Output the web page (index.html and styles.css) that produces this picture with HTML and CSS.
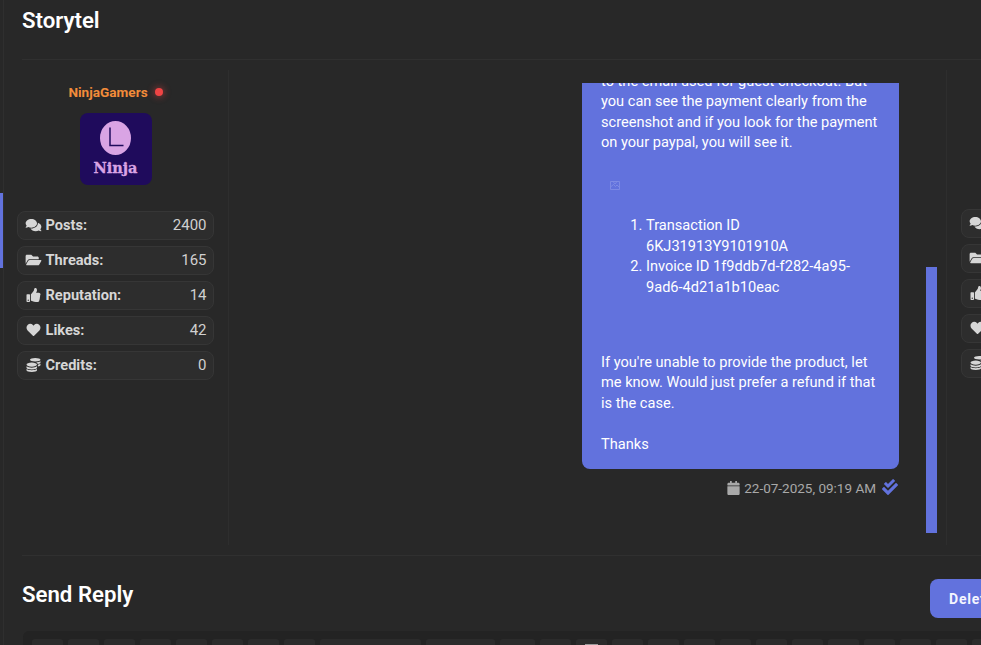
FILE: index.html
```html
<!DOCTYPE html>
<html lang="en">
<head>
<meta charset="utf-8">
<title>Storytel</title>
<link rel="stylesheet" href="styles.css">
</head>
<body>
<svg class="defs" width="0" height="0" aria-hidden="true">
  <symbol id="i-comments" viewBox="0 0 576 512"><path d="M416 192c0-88.4-93.1-160-208-160S0 103.6 0 192c0 34.3 14.1 65.9 38 92-13.4 30.2-35.5 54.2-35.8 54.5-2.2 2.3-2.8 5.7-1.5 8.7S4.8 352 8 352c36.6 0 66.9-12.3 88.7-25 32.2 15.7 70.3 25 111.3 25 114.9 0 208-71.6 208-160zm122 220c23.9-26 38-57.7 38-92 0-66.9-53.5-124.2-129.3-148.1.9 6.6 1.3 13.3 1.3 20.1 0 105.9-107.7 192-240 192-10.8 0-21.3-.8-31.7-1.9C207.8 439.6 281.8 480 368 480c41 0 79.1-9.2 111.3-25 21.8 12.7 52.1 25 88.7 25 3.2 0 6.1-1.9 7.3-4.8 1.3-2.9.7-6.3-1.5-8.7-.3-.3-22.4-24.2-35.8-54.5z"/></symbol>
  <symbol id="i-folder" viewBox="0 0 576 512"><path d="M572.694 292.093L500.27 416.248A63.997 63.997 0 0 1 444.989 448H45.025c-18.523 0-30.064-20.093-20.731-36.093l72.424-124.155A64 64 0 0 1 152 256h399.964c18.523 0 30.064 20.093 20.73 36.093zM152 224h328v-48c0-26.51-21.49-48-48-48H272l-64-64H48C21.49 64 0 85.49 0 112v278.046l69.077-118.418C86.214 242.25 117.989 224 152 224z"/></symbol>
  <symbol id="i-thumb" viewBox="0 0 512 512"><path d="M104 224H24c-13.255 0-24 10.745-24 24v240c0 13.255 10.745 24 24 24h80c13.255 0 24-10.745 24-24V248c0-13.255-10.745-24-24-24zM64 472c-13.255 0-24-10.745-24-24s10.745-24 24-24 24 10.745 24 24-10.745 24-24 24zM384 81.452c0 42.416-25.97 66.208-33.277 94.548h101.723c33.397 0 59.397 27.746 59.553 58.098.084 17.938-7.546 37.249-19.439 49.197l-.11.11c9.836 23.337 8.237 56.037-9.308 79.469 8.681 25.895-.069 57.704-16.382 74.757 4.298 17.598 2.244 32.575-6.148 44.632C440.202 511.587 389.616 512 346.839 512l-2.845-.001c-48.287-.017-87.806-17.598-119.56-31.725-15.957-7.099-36.821-15.887-52.651-16.178-6.54-.12-11.783-5.457-11.783-11.998v-213.77c0-3.2 1.282-6.271 3.558-8.521 39.614-39.144 56.648-80.587 89.117-113.111 14.804-14.832 20.188-37.236 25.393-58.902C282.515 39.293 291.817 0 312 0c24 0 72 8 72 81.452z"/></symbol>
  <symbol id="i-heart" viewBox="0 0 512 512"><path d="M462.3 62.6C407.5 15.9 326 24.3 275.7 76.2L256 96.5l-19.7-20.3C186.1 24.3 104.5 15.9 49.7 62.6c-62.8 53.6-66.1 149.8-9.9 207.9l193.5 199.8c12.5 12.9 32.8 12.9 45.3 0l193.5-199.8c56.3-58.1 53-154.3-9.8-207.9z"/></symbol>
  <symbol id="i-coins" viewBox="0 0 512 512"><path d="M0 405.3V448c0 35.3 86 64 192 64s192-28.7 192-64v-42.7C342.7 434.4 267.2 448 192 448S41.3 434.4 0 405.3zM320 128c106 0 192-28.7 192-64S426 0 320 0 128 28.7 128 64s86 64 192 64zM0 300.4V352c0 35.3 86 64 192 64s192-28.7 192-64v-51.6c-41.3 34-116.9 51.6-192 51.6S41.3 334.4 0 300.4zm416 11c57.3-11.1 96-31.7 96-55.4v-42.7c-23.2 16.4-57.3 27.6-96 34.5v63.6zM192 160C86 160 0 195.8 0 240s86 80 192 80 192-35.8 192-80-86-80-192-80zm219.3 56.3c60-10.8 100.7-32 100.7-56.3v-42.7c-35.5 25.1-96.5 38.6-160.7 41.8 29.5 14.3 51.2 33.5 60 57.2z"/></symbol>
  <symbol id="i-cal" viewBox="0 0 448 512"><path d="M12 192h424c6.6 0 12 5.4 12 12v260c0 26.5-21.5 48-48 48H48c-26.5 0-48-21.5-48-48V204c0-6.6 5.4-12 12-12zm436-44v-36c0-26.5-21.5-48-48-48h-48V12c0-6.6-5.4-12-12-12h-40c-6.6 0-12 5.4-12 12v52H160V12c0-6.6-5.4-12-12-12h-40c-6.6 0-12 5.4-12 12v52H48C21.5 64 0 85.5 0 112v36c0 6.6 5.4 12 12 12h424c6.6 0 12-5.4 12-12z"/></symbol>
  <symbol id="i-check" viewBox="0 0 512 512"><path d="M505 174.8l-39.6-39.6c-9.4-9.4-24.6-9.4-33.9 0L192 374.7 80.6 263.2c-9.4-9.4-24.6-9.4-33.9 0L7 302.9c-9.4 9.4-9.4 24.6 0 34L175 505c9.4 9.4 24.6 9.4 33.9 0l296-296.2c9.4-9.5 9.4-24.7.1-34zm-324.3 106c6.2 6.3 16.4 6.3 22.6 0l208-208.2c6.2-6.3 6.2-16.4 0-22.6L366.1 4.7c-6.2-6.3-16.4-6.3-22.6 0L192 156.2l-55.4-55.5c-6.2-6.3-16.4-6.3-22.6 0L68.7 146c-6.2 6.3-6.2 16.4 0 22.6l112 112.2z"/></symbol>
</svg>

<div class="page">
  <aside class="rail"><div class="rail-thumb"></div></aside>
  <main class="main">
    <div class="content">
      <h1 class="title">Storytel</h1>
      <div class="rule rule-top"></div>

      <section class="post">
        <div class="author">
          <div class="user"><span class="user-name">NinjaGamers</span><span class="dot"></span></div>
          <svg class="avatar" viewBox="0 0 72 72" role="img" aria-label="Ninja avatar">
            <rect width="72" height="72" rx="8" fill="#1f0b5c"/>
            <ellipse cx="35.5" cy="25" rx="15.5" ry="17" fill="#d9a4e4"/>
            <path d="M30 14.500v18h13.500" fill="none" stroke="#1f0b5c" stroke-width="1.500"/>
            <text x="35.500" y="60" class="avatar-text" text-anchor="middle">Ninja</text>
          </svg>
          <ul class="stats">
            <li class="stat"><span class="stat-label"><svg class="ico"><use href="#i-comments"/></svg>Posts:</span><span class="stat-val">2400</span></li>
            <li class="stat"><span class="stat-label"><svg class="ico"><use href="#i-folder"/></svg>Threads:</span><span class="stat-val">165</span></li>
            <li class="stat"><span class="stat-label"><svg class="ico"><use href="#i-thumb"/></svg>Reputation:</span><span class="stat-val">14</span></li>
            <li class="stat"><span class="stat-label"><svg class="ico"><use href="#i-heart"/></svg>Likes:</span><span class="stat-val">42</span></li>
            <li class="stat"><span class="stat-label"><svg class="ico"><use href="#i-coins"/></svg>Credits:</span><span class="stat-val">0</span></li>
          </ul>
        </div>

        <div class="messages">
          <div class="pane">
            <div class="bubble">
              <p class="para">to the email used for guest checkout. But you can see the payment clearly from the screenshot and if you look for the payment on your paypal, you will see it.</p>
              <svg class="broken" viewBox="0 0 10 9" aria-hidden="true"><path d="M.5.5h9v8h-9zM.5 6l3-2.500 2 2 1.500-1.500 2.500 2.500M3 .5l2 2.500 2-2.500" fill="none" stroke="#8490e6" stroke-width=".8"/></svg>
              <ol class="list">
                <li>Transaction ID 6KJ31913Y9101910A</li>
                <li>Invoice ID 1f9ddb7d-f282-4a95-9ad6-4d21a1b10eac</li>
              </ol>
              <p class="para">If you're unable to provide the product, let me know. Would just prefer a refund if that is the case.<br><br>Thanks</p>
            </div>
            <div class="meta"><svg class="ico-cal"><use href="#i-cal"/></svg><span>22-07-2025, 09:19 AM</span><svg class="ico-check"><use href="#i-check"/></svg></div>
          </div>
          <div class="track"><div class="thumb"></div></div>
        </div>

        <div class="other">
          <ul class="stats">
            <li class="stat"><span class="stat-label"><svg class="ico"><use href="#i-comments"/></svg>Posts:</span><span class="stat-val">12</span></li>
            <li class="stat"><span class="stat-label"><svg class="ico"><use href="#i-folder"/></svg>Threads:</span><span class="stat-val">1</span></li>
            <li class="stat"><span class="stat-label"><svg class="ico"><use href="#i-thumb"/></svg>Reputation:</span><span class="stat-val">0</span></li>
            <li class="stat"><span class="stat-label"><svg class="ico"><use href="#i-heart"/></svg>Likes:</span><span class="stat-val">0</span></li>
            <li class="stat"><span class="stat-label"><svg class="ico"><use href="#i-coins"/></svg>Credits:</span><span class="stat-val">0</span></li>
          </ul>
        </div>
      </section>

      <div class="rule rule-bottom"></div>

      <div class="reply-head">
        <h2 class="title reply-title">Send Reply</h2>
        <button class="delete" type="button">Delete</button>
      </div>

      <div class="toolbar">
        <span class="tb"></span><span class="tb"></span><span class="tb"></span><span class="tb"></span><span class="tb"></span><span class="tb"></span><span class="tb"></span><span class="tb"></span>
        <span class="tb tb-font"></span><span class="tb tb-size"></span><span class="tb tb-36"></span><span class="tb"></span>
        <span class="tb tb-mark"></span><span class="tb"></span><span class="tb"></span><span class="tb"></span><span class="tb"></span><span class="tb"></span><span class="tb"></span><span class="tb"></span><span class="tb"></span><span class="tb"></span><span class="tb"></span><span class="tb"></span>
      </div>
    </div>
  </main>
</div>
</body>
</html>
```

FILE: styles.css
```css
* { box-sizing: border-box; }
html, body { margin: 0; height: 100%; overflow: hidden; }
body { background: #282828; font-family: Roboto, "Liberation Sans", sans-serif; color: #fff; }
.defs { position: absolute; }
.page { display: flex; height: 645px; overflow: hidden; }
.rail { flex: none; width: 4px; border-right: 1px solid #2f2f2f; padding-top: 193px; }
.rail-thumb { width: 3px; height: 75px; background: #6272dd; }
.main { flex: 1; min-width: 0; overflow: hidden; padding-left: 18px; }
.content { width: 1000px; padding-top: 6px; }

.title { margin: 0; font-size: 22.2px; line-height: 28px; font-weight: 600; color: #fff; }
.rule { height: 1px; background: #303030; }
.rule-top { margin-top: 25px; }
.rule-bottom { margin-top: 10px; }

.post { display: flex; height: 475px; margin: 10px 0 0 -5px; }
.author { flex: none; width: 212px; padding-right: 15px; border-right: 1px solid #2e2e2e; display: flex; flex-direction: column; align-items: center; }
.user { display: flex; align-items: center; gap: 7px; height: 20px; margin-top: 12px; padding-left: 1px; }
.user-name { font-size: 13.6px; font-weight: 700; color: #f28c3a; }
.dot { width: 8px; height: 8px; border-radius: 50%; background: #ef4444; box-shadow: 0 0 6px 2px rgba(239, 68, 68, .35); }
.avatar { width: 72px; height: 72px; margin: 11px 0 0 2px; display: block; }
.avatar-text { font-family: "DejaVu Serif", serif; font-size: 14.5px; font-weight: 700; fill: #d9a4e4; stroke: #d9a4e4; stroke-width: .3px; }

.stats { list-style: none; margin: 26px 0 0; padding: 0; width: 197px; display: flex; flex-direction: column; gap: 6px; }
.stat { height: 29px; display: flex; align-items: center; justify-content: space-between; padding: 0 6px 2px 7px; background: #2d2d2d; border: 1px solid #363636; border-radius: 8px; }
.stat-label { display: flex; align-items: center; font-size: 14.6px; font-weight: 700; color: #d6d6d6; white-space: nowrap; }
.stat-val { font-size: 15px; color: #d0d0d0; }
.ico { width: 17px; height: 14px; margin-right: 4px; fill: #d6d6d6; flex: none; }

.messages { flex: none; width: 718px; display: flex; padding: 13px 9px 12px 0; border-right: 1px solid #2e2e2e; }
.pane { flex: 1; min-width: 0; overflow: hidden; display: flex; flex-direction: column; justify-content: flex-end; align-items: flex-end; padding: 0 27px 35px 0; }
.bubble { flex: none; width: 317px; padding: 0 19px 15px; background: #6272dd; border-radius: 0 0 8px 8px; font-size: 14.6px; line-height: 20.4px; color: #fff; }
.para { margin: 0; }
.broken { display: block; width: 10px; height: 9px; margin: 29px 0 0 9px; }
.list { margin: 25px 0 55px; padding-left: 45px; }
.meta { flex: none; display: flex; align-items: center; height: 20px; margin-top: 9px; font-size: 13.5px; color: #a9a9a9; }
.ico-cal { width: 13px; height: 14px; margin-right: 4px; fill: #a9a9a9; }
.ico-check { width: 16px; height: 16px; margin: 0 1px 2px 6px; fill: #6272dd; }
.track { flex: none; width: 11px; }
.thumb { height: 266px; margin-top: 184px; background: #6272dd; }

.other { flex: 1; padding-left: 14px; }
.other .stats { margin-top: 139px; }

.reply-head { display: flex; justify-content: space-between; align-items: flex-start; margin-top: 23px; }
.reply-title { margin-top: 1px; }
.delete { width: 92px; height: 39px; border: 0; border-radius: 8px; background: #6272dd; color: #f4f5ff; font: 700 14px Roboto, sans-serif; letter-spacing: .8px; text-align: left; padding-left: 19px; }

.toolbar { display: flex; gap: 5px; height: 40px; margin: 13px 0 0 1px; padding: 8px 9px; background: #232323; border-radius: 6px 6px 0 0; overflow: hidden; }
.tb { flex: none; width: 31px; height: 30px; background: #2b2b2b; border-radius: 3px; }
.tb-font { width: 101px; }
.tb-size { width: 69px; }
.tb-36 { width: 35px; }
.tb-mark { position: relative; }
.tb-mark::after { content: ""; position: absolute; left: 9px; top: 5px; width: 13px; height: 2px; background: #9a9a9a; }
```
